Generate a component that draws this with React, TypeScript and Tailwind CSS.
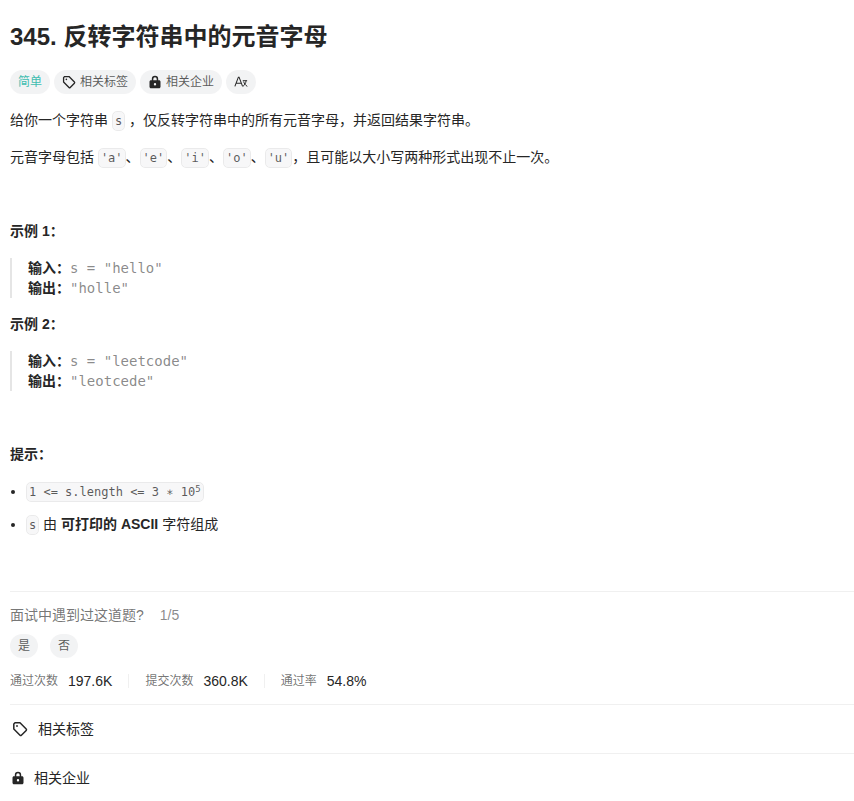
const SANS = "font-['Liberation_Sans','Noto_Sans_CJK_SC',sans-serif]";
const MONO = "font-['DejaVu_Sans_Mono',monospace]";
const COMMA = "\uFF0C";
const COLON = "\uFF1A";

function TagIcon({ className }: { className: string }) {
    return (
        <svg viewBox="0 0 16 16" fill="none" stroke="currentColor" strokeWidth="1.5" className={className}>
            <path d="M1.800 3 3 1.800h5l6.200 6.200a1 1 0 0 1 0 1.400l-4.800 4.800a1 1 0 0 1-1.400 0L1.800 8Z" strokeLinejoin="round" />
            <circle cx="5" cy="5" r="0.9" fill="currentColor" stroke="none" />
        </svg>
    );
}

function LockIcon({ className }: { className: string }) {
    return (
        <svg viewBox="0 0 14 14" fill="currentColor" className={className}>
            <path
                fillRule="evenodd"
                d="M3.800 5.200V4a3.200 3.200 0 0 1 6.400 0v1.200h.8c.9 0 1.500.6 1.500 1.500v5c0 .9-.6 1.500-1.500 1.500H3c-.9 0-1.500-.6-1.500-1.500v-5c0-.9.6-1.500 1.500-1.500ZM5.300 5.200h3.400V4a1.700 1.700 0 0 0-3.400 0ZM7 8a1.200 1.200 0 1 0 0 2.400A1.200 1.200 0 0 0 7 8Z"
            />
        </svg>
    );
}

function TranslateIcon({ className }: { className: string }) {
    return (
        <svg viewBox="0 0 16 16" fill="none" stroke="currentColor" className={className}>
            <path d="M1 13 5 2.500h.8L9.800 13M2.500 9.500h6" strokeWidth="1.200" />
            <path d="M10 6.500h5M13.800 6.500c-.3 2.800-1.500 5-3.600 6.500M11 7.500c.7 2.300 2 4.200 4.200 5.500" strokeWidth="1.100" />
        </svg>
    );
}

function Code({ children }: { children: React.ReactNode }) {
    return (
        <code className={`${MONO} rounded-[5px] border border-[#0000000d] bg-[#000a2008] px-[2px] py-[2px] text-[12px] leading-[18px] text-[#262626bf]`}>
            {children}
        </code>
    );
}

function Chip({ children, className = "text-[#262626bf]" }: { children: React.ReactNode; className?: string }) {
    return (
        <div className={`flex h-[24px] items-center gap-[4px] rounded-full bg-[#000a200d] px-[8px] text-[12px] ${className}`}>
            {children}
        </div>
    );
}

function Example({ title, input, output }: { title: string; input: string; output: string }) {
    return (
        <>
            <p className="font-bold">
                {title}
                {COLON}
            </p>
            <div className="mt-[16px] border-l-2 border-[#0000001a] pl-[16px] leading-[20px]">
                <div>
                    <b>输入{COLON}</b>
                    <span className={`${MONO} text-[#2626268c]`}>{input}</span>
                </div>
                <div>
                    <b>输出{COLON}</b>
                    <span className={`${MONO} text-[#2626268c]`}>{output}</span>
                </div>
            </div>
        </>
    );
}

function Stat({ label, value, last }: { label: string; value: string; last?: boolean }) {
    return (
        <>
            <span className="text-[12px] text-[#262626a6]">{label}</span>
            <span className="ml-[10px] text-[14px] text-[#262626]">{value}</span>
            {!last && <span className="mx-[16px] h-[14px] w-px bg-[#0000000f]" />}
        </>
    );
}

export default function App() {
    return (
        <div className={`${SANS} h-[801px] overflow-hidden bg-white pl-[10px] text-[14px] leading-[22px] text-[#262626]`}>
            <h1 className="pt-[21px] text-[24px] font-bold leading-[32px]">345. 反转字符串中的元音字母</h1>

            <div className="mt-[17px] flex items-center gap-[4px]">
                <Chip className="text-[#3fbdb0]">简单</Chip>
                <Chip>
                    <TagIcon className="h-[14px] w-[14px] text-[#262626]" />
                    相关标签
                </Chip>
                <Chip>
                    <LockIcon className="h-[14px] w-[14px] text-[#262626]" />
                    相关企业
                </Chip>
                <Chip>
                    <TranslateIcon className="h-[14px] w-[14px] text-[#262626]" />
                </Chip>
            </div>

            <p className="mt-[15px]">
                给你一个字符串 <Code>s</Code> {COMMA}仅反转字符串中的所有元音字母{COMMA}并返回结果字符串。
            </p>
            <p className="mt-[15px]">
                元音字母包括 <Code>'a'</Code>、<Code>'e'</Code>、<Code>'i'</Code>、<Code>'o'</Code>、<Code>'u'</Code>
                {COMMA}且可能以大小写两种形式出现不止一次。
            </p>

            <div className="mt-[52px]">
                <Example title="示例 1" input={'s = "hello"'} output={'"holle"'} />
            </div>
            <div className="mt-[15px]">
                <Example title="示例 2" input={'s = "leetcode"'} output={'"leotcede"'} />
            </div>

            <p className="mt-[52px] font-bold">提示{COLON}</p>
            <ul className="mt-[15px] list-disc pl-[16px]">
                <li>
                    <Code>
                        1 &lt;= s.length &lt;= 3 ∗ 10<sup className="text-[9px]">5</sup>
                    </Code>
                </li>
                <li className="mt-[11px]">
                    <Code>s</Code> 由 <b>可打印的 ASCII</b> 字符组成
                </li>
            </ul>

            <div className="mt-[56px] border-t border-[#0000000f] pt-[12px]">
                <div className="flex text-[#2626268c]">
                    <span className="text-[#262626a6]">面试中遇到过这道题?</span>
                    <span className="ml-[16px]">1/5</span>
                </div>
                <div className="mt-[8px] flex gap-[12px]">
                    <div className="flex h-[24px] w-[28px] items-center justify-center rounded-full bg-[#000a200d] text-[12px] text-[#262626bf]">是</div>
                    <div className="flex h-[24px] w-[28px] items-center justify-center rounded-full bg-[#000a200d] text-[12px] text-[#262626bf]">否</div>
                </div>
                <div className="mt-[12px] flex items-center">
                    <Stat label="通过次数" value="197.6K" />
                    <Stat label="提交次数" value="360.8K" />
                    <Stat label="通过率" value="54.8%" last />
                </div>
            </div>

            <div className="mt-[12px] flex h-[49px] items-center gap-[10px] border-t border-[#0000000f]">
                <TagIcon className="ml-[2px] h-[16px] w-[16px] text-[#262626]" />
                相关标签
            </div>
            <div className="flex h-[49px] items-center gap-[9px] border-t border-[#0000000f]">
                <LockIcon className="ml-[1px] h-[14px] w-[14px] text-[#262626]" />
                相关企业
            </div>
        </div>
    );
}
